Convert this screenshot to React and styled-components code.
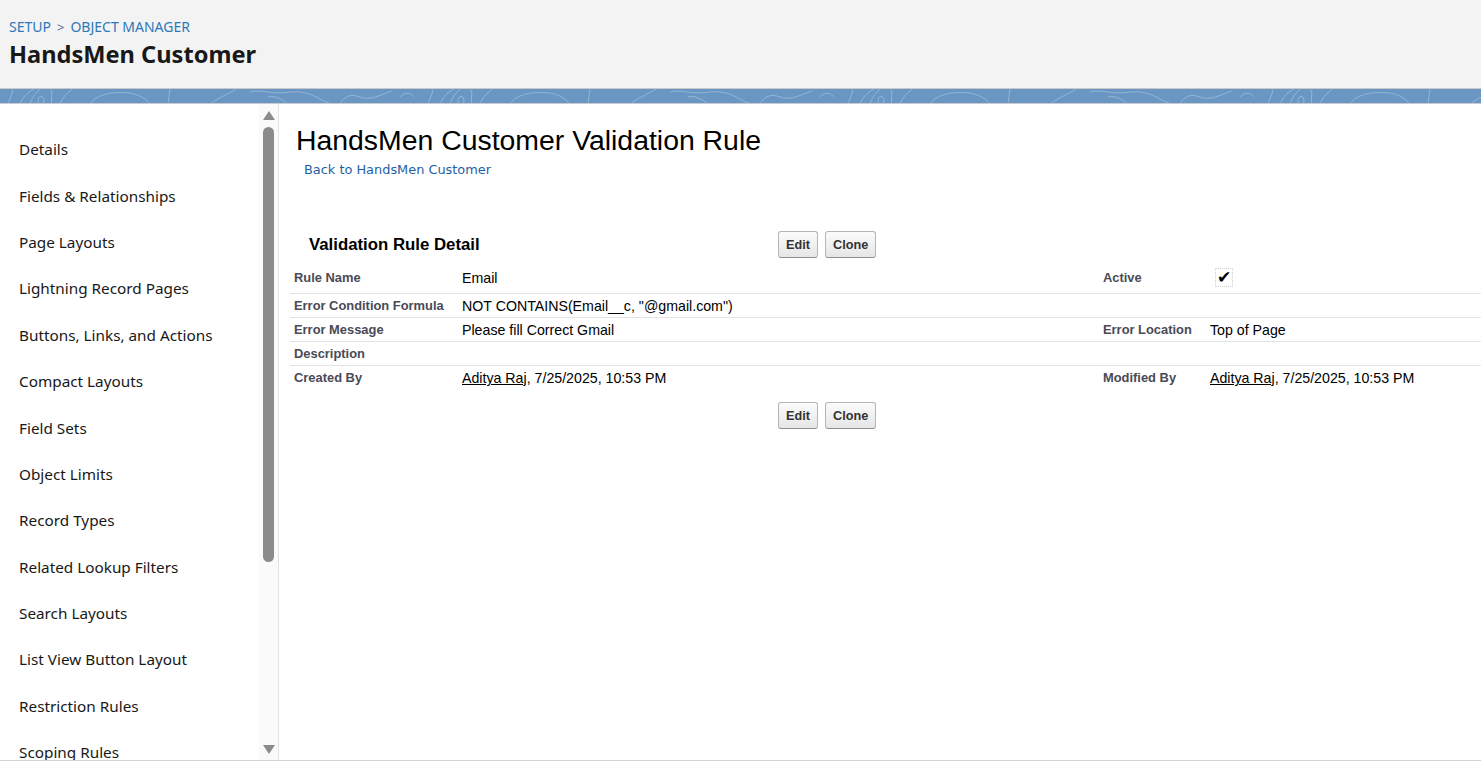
import React from 'react';
import styled, { createGlobalStyle } from 'styled-components';

const GlobalStyle = createGlobalStyle`
  html, body {
    margin: 0;
    padding: 0;
    background: #ffffff;
    height: 761px;
    overflow: hidden;
  }
  * { box-sizing: border-box; }
`;

const navItems = [
  'Details',
  'Fields & Relationships',
  'Page Layouts',
  'Lightning Record Pages',
  'Buttons, Links, and Actions',
  'Compact Layouts',
  'Field Sets',
  'Object Limits',
  'Record Types',
  'Related Lookup Filters',
  'Search Layouts',
  'List View Button Layout',
  'Restriction Rules',
  'Scoping Rules',
];

const Page = styled.div`
  display: flex;
  flex-direction: column;
  height: 761px;
  font-family: "Noto Sans", "Open Sans", sans-serif;
`;

const Header = styled.header`
  height: 89px;
  background: #f3f3f3;
  border-bottom: 1px solid #c9c9c9;
  padding: 17px 9px 0;
`;

const Crumbs = styled.div`
  display: flex;
  align-items: center;
  gap: 6px;
  font-size: 14px;
  line-height: 20px;
  color: #2e79b7;
  text-transform: uppercase;
`;

const CrumbSep = styled.span`
  color: #54698d;
  font-size: 13px;
`;

const PageTitle = styled.h1`
  margin: 1px 0 0;
  font-size: 23.6px;
  line-height: 32px;
  font-weight: 700;
  color: #181818;
`;

const Band = styled.div`
  height: 15px;
  background: #6a96c4;
  border-bottom: 1px solid #c8ccd2;
  overflow: hidden;
  svg { display: block; }
`;

const Body = styled.div`
  flex: 1;
  display: flex;
  min-height: 0;
  border-bottom: 1px solid #d4d4d4;
`;

const Sidebar = styled.aside`
  width: 279px;
  flex: none;
  display: flex;
  border-right: 1px solid #e2e2e2;
  overflow: hidden;
`;

const NavList = styled.nav`
  flex: 1;
  padding-top: 22px;
`;

const NavItem = styled.div`
  height: 46.4px;
  display: flex;
  align-items: center;
  padding-left: 19px;
  font-size: 15.3px;
  color: #181818;
  white-space: nowrap;
`;

const ScrollTrack = styled.div`
  width: 19px;
  flex: none;
  background: #fafafa;
  display: flex;
  flex-direction: column;
  align-items: center;
  padding-top: 7px;
`;

const Arrow = styled.div`
  width: 0;
  height: 0;
  border-left: 6px solid transparent;
  border-right: 6px solid transparent;
  ${p => p.$down
    ? 'border-top: 9px solid #8b8b8b; margin-top: auto; margin-bottom: 6px;'
    : 'border-bottom: 9px solid #8b8b8b;'}
`;

const Thumb = styled.div`
  width: 11px;
  height: 435px;
  margin-top: 7px;
  border-radius: 6px;
  background: #8b8b8b;
`;

const Main = styled.main`
  flex: 1;
  padding: 20px 0 0 11px;
  font-family: Arial, "Liberation Sans", sans-serif;
  color: #000;
`;

const RuleTitle = styled.h2`
  margin: 0 0 0 6px;
  font-size: 28.4px;
  line-height: 32px;
  font-weight: 400;
`;

const BackLink = styled.a`
  display: inline-block;
  margin: 5px 0 0 14px;
  font-family: "DejaVu Sans", Verdana, sans-serif;
  font-size: 12.9px;
  line-height: 18px;
  color: #1d5fa3;
  text-decoration: none;
`;

const Block = styled.section`
  margin-top: 48px;
`;

const BlockHeader = styled.div`
  display: grid;
  grid-template-columns: 488px auto;
  align-items: center;
  height: 35px;
`;

const BlockTitle = styled.h3`
  margin: 0;
  padding-left: 19px;
  font-size: 16.8px;
  font-weight: 700;
`;

const Buttons = styled.div`
  display: flex;
  gap: 7px;
  ${p => p.$bottom && 'margin: 12px 0 0 488px;'}
`;

const Button = styled.button`
  height: 27px;
  padding: 0 7px;
  font-family: Arial, "Liberation Sans", sans-serif;
  font-size: 12.7px;
  font-weight: 700;
  color: #333;
  background: linear-gradient(#fbfbfb, #e6e6e6);
  border: 1px solid #b5b5b5;
  border-bottom-color: #8f8f8f;
  border-radius: 3px;
`;

const Row = styled.div`
  display: grid;
  grid-template-columns: 168px 641px 107px 1fr;
  align-items: center;
  min-height: ${p => (p.$tall ? '32px' : '24px')};
  border-bottom: ${p => (p.$last ? 'none' : '1px solid #e3e3e3')};
`;

const Label = styled.div`
  padding-left: 4px;
  font-size: 12.9px;
  line-height: 16px;
  font-weight: 700;
  color: #4a4a56;
  white-space: nowrap;
`;

const Value = styled.div`
  padding-left: 4px;
  font-size: 14.2px;
  line-height: 16px;
  color: #000;
  white-space: nowrap;
`;

const UserLink = styled.span`
  text-decoration: underline;
`;

const CheckBox = styled.span`
  display: inline-flex;
  align-items: center;
  justify-content: center;
  width: 18px;
  height: 19px;
  margin-left: 5px;
  border: 1px dotted #cfcfcf;
  font-size: 17px;
  line-height: 1;
  color: #000;
`;

function WaveBand() {
  return (
    <svg width="1481" height="15" viewBox="0 0 1481 15">
      <defs>
        <pattern id="waves" width="420" height="15" patternUnits="userSpaceOnUse">
          <g fill="none" stroke="rgba(255,255,255,0.28)" strokeWidth="1">
            <path d="M8 15 C10 8 14 3 12 0" />
            <path d="M20 15 C24 6 30 2 34 0" />
            <path d="M30 15 C32 8 36 4 40 0" />
            <path d="M38 12 C38 6 44 6 44 12 C44 16 38 16 38 12" />
            <path d="M52 15 C50 8 54 3 50 0" />
            <path d="M60 15 C64 5 70 3 72 0" />
            <path d="M90 15 C96 6 110 2 130 4 C140 6 146 10 150 15" />
            <path d="M170 0 L168 15" />
            <path d="M210 15 C220 8 230 4 236 0" />
            <path d="M250 3 C262 0 272 6 290 3 C300 2 310 4 320 10 C324 13 330 15 336 15" />
            <path d="M268 8 C274 6 282 10 288 15" />
            <path d="M340 15 C344 8 350 4 360 8 C370 12 380 6 392 2" />
            <path d="M400 8 C404 3 410 3 414 8" />
          </g>
        </pattern>
      </defs>
      <rect width="1481" height="15" fill="url(#waves)" />
    </svg>
  );
}

function DetailRow({ label, value, label2, value2, last, tall, children }) {
  return (
    <Row $last={last} $tall={tall}>
      <Label>{label}</Label>
      <Value>{value}</Value>
      <Label>{label2}</Label>
      <Value>{value2 || children}</Value>
    </Row>
  );
}

function ActionButtons({ bottom }) {
  return (
    <Buttons $bottom={bottom}>
      <Button>Edit</Button>
      <Button>Clone</Button>
    </Buttons>
  );
}

export default function App() {
  const stamp = (
    <>
      <UserLink>Aditya Raj</UserLink>, 7/25/2025, 10:53 PM
    </>
  );

  return (
    <Page>
      <GlobalStyle />
      <Header>
        <Crumbs>
          <span>Setup</span>
          <CrumbSep>&gt;</CrumbSep>
          <span>Object Manager</span>
        </Crumbs>
        <PageTitle>HandsMen Customer</PageTitle>
      </Header>
      <Band>
        <WaveBand />
      </Band>
      <Body>
        <Sidebar>
          <NavList>
            {navItems.map(item => (
              <NavItem key={item}>{item}</NavItem>
            ))}
          </NavList>
          <ScrollTrack>
            <Arrow />
            <Thumb />
            <Arrow $down />
          </ScrollTrack>
        </Sidebar>
        <Main>
          <RuleTitle>HandsMen Customer Validation Rule</RuleTitle>
          <BackLink href="#">Back to HandsMen Customer</BackLink>
          <Block>
            <BlockHeader>
              <BlockTitle>Validation Rule Detail</BlockTitle>
              <ActionButtons />
            </BlockHeader>
            <DetailRow label="Rule Name" value="Email" label2="Active" tall>
              <CheckBox>✔</CheckBox>
            </DetailRow>
            <DetailRow
              label="Error Condition Formula"
              value={'NOT CONTAINS(Email__c, "@gmail.com")'}
            />
            <DetailRow
              label="Error Message"
              value="Please fill Correct Gmail"
              label2="Error Location"
              value2="Top of Page"
            />
            <DetailRow label="Description" />
            <DetailRow
              label="Created By"
              value={stamp}
              label2="Modified By"
              value2={stamp}
              last
            />
            <ActionButtons bottom />
          </Block>
        </Main>
      </Body>
    </Page>
  );
}
